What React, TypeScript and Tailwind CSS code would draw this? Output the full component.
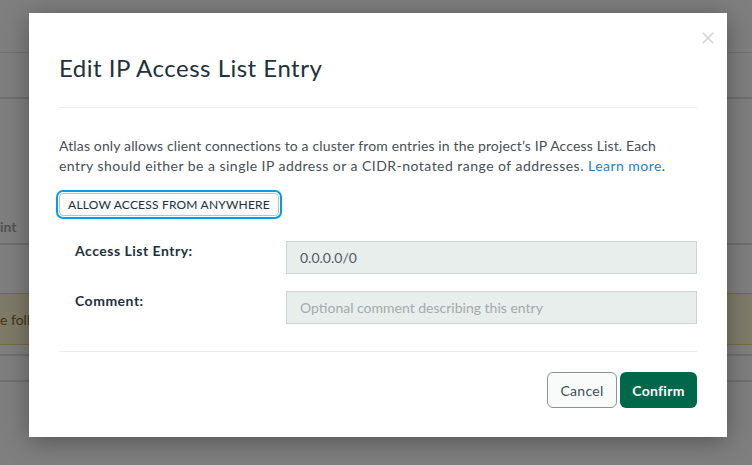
import { X } from "lucide-react";

const FONT = "font-['Lato','Open_Sans',sans-serif]";

export default function App() {
  return (
    <div className={`relative h-[465px] w-[752px] overflow-hidden bg-white ${FONT}`}>
      {/* page behind the overlay */}
      <div className="flex flex-col">
        <div className="h-[53px] border-b border-[#e6e6e6]" />
        <div className="h-[46px] border-b-2 border-[#dedede]" />
        <div className="h-[118px]" />
        <div className="h-[20px] text-[14px] leading-[20px] font-bold text-[#a3a3a3]">int</div>
        <div className="h-[8px] border-b-2 border-[#dedede]" />
        <div className="h-[48px]" />
        <div className="flex h-[52px] items-center border-y border-[#e9d47a] bg-[#fef6d2] text-[14px] text-[#8a6a1f]">
          e following
        </div>
        <div className="h-[11px] border-b-2 border-[#dedede]" />
        <div className="h-[26px] border-b-2 border-[#dedede]" />
      </div>

      {/* overlay */}
      <div className="absolute inset-0 bg-black/50 pl-[29px] pt-[13px]">
        <div className="relative flex h-[424px] w-[698px] flex-col bg-white px-[30px] pt-[39px] shadow-[0_4px_24px_rgba(0,0,0,0.35)]">
          <button className="absolute right-[9px] top-[15px] text-[#cfd4d6]">
            <X className="h-[20px] w-[20px]" strokeWidth={1.75} />
          </button>

          <h1 className="h-[32px] text-[24px] leading-[32px] tracking-[0.5px] text-[#21313c]">Edit IP Access List Entry</h1>
          <div className="mt-[23px] h-px bg-[#e8eded]" />

          <p className="mt-[28px] text-[14px] leading-[20px] text-[#464f55]">
            <span className="tracking-[0.14px]">
              Atlas only allows client connections to a cluster from entries in the project’s IP Access List. Each
            </span>
            <br />
            <span className="tracking-[0.47px]">
              entry should either be a single IP address or a CIDR-notated range of addresses.{" "}
              <span className="text-[#1a7fd4]">Learn more</span>.
            </span>
          </p>

          <div className="mt-[17px] flex">
            <button className="flex h-[23px] w-[220px] items-center justify-center rounded-[4px] border border-[#b8c4c2] bg-[#f9fbfa] text-[12px] tracking-[0.2px] text-[#21313c] shadow-[0_0_0_1px_#ffffff,0_0_0_3px_#019ee2]">
              ALLOW ACCESS FROM ANYWHERE
            </button>
          </div>

          <div className="mt-[25px] flex flex-col gap-[17px] pl-[16px]">
            <Row label="Access List Entry:">
              <div className="flex h-[33px] items-center border border-[#ccd3d1] bg-[#e7eeec] px-[13px] text-[14px] text-[#4f5b61]">
                0.0.0.0/0
              </div>
            </Row>
            <Row label="Comment:">
              <div className="flex h-[33px] items-center border border-[#ccd3d1] bg-[#e7eeec] px-[13px] text-[14px] text-[#a3abae]">
                Optional comment describing this entry
              </div>
            </Row>
          </div>

          <div className="mt-[27px] h-px bg-[#e8eded]" />

          <div className="mt-[20px] flex justify-end gap-[3px]">
            <button className="h-[36px] w-[70px] rounded-[6px] border border-[#889397] bg-[#f9fbfa] text-[14px] tracking-[0.3px] text-[#3d4f58]">
              Cancel
            </button>
            <button className="h-[36px] w-[77px] rounded-[6px] bg-[#00684a] text-[14px] font-bold tracking-[0.3px] text-white">
              Confirm
            </button>
          </div>
        </div>
      </div>
    </div>
  );
}

function Row({ label, children }: { label: string; children: React.ReactNode }) {
  return (
    <div className="flex">
      <div className="w-[211px] shrink-0 text-[14px] font-bold leading-[20px] tracking-[0.5px] text-[#21313c]">{label}</div>
      <div className="flex-1">{children}</div>
    </div>
  );
}
